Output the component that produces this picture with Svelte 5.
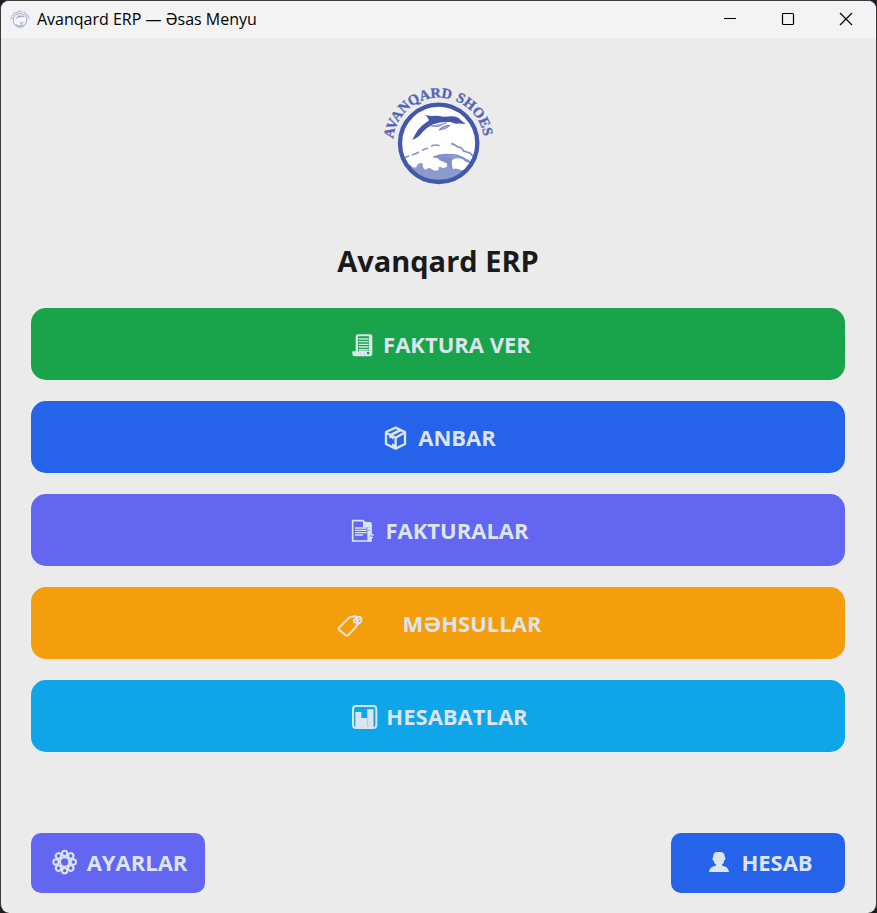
<script>
  const menu = [
    { id: 'invoice', label: 'FAKTURA VER', color: '#19a34a' },
    { id: 'stock', label: 'ANBAR', color: '#2563eb' },
    { id: 'invoices', label: 'FAKTURALAR', color: '#6366f1' },
    { id: 'products', label: 'MƏHSULLAR', color: '#f59e0b', wide: true },
    { id: 'reports', label: 'HESABATLAR', color: '#0ea5e9' },
  ];
</script>

{#snippet logo(id, viewBox)}
  <svg class="logo" {viewBox} role="img" aria-label="Avanqard Shoes">
    <defs>
      <path id="{id}-arc" d="M69 205 A137 137 0 0 1 343 205" />
      <clipPath id="{id}-disc"><circle cx="206" cy="205" r="112" /></clipPath>
    </defs>
    <circle cx="206" cy="205" r="116" fill="#fff" />
    <g clip-path="url(#{id}-disc)">
      <path
        d="M85 268 L122 270 Q128 281 139 276 Q145 261 158 265 Q157 282 168 284 Q177 275 185 283 Q195 291 207 284 Q202 276 211 275 Q222 283 231 274 Q233 262 222 257 Q208 261 204 250 L190 247 Q205 239 231 239 Q252 239 275 247 Q292 252 306 264 Q286 264 277 252 Q259 247 247 254 Q243 268 249 282 Q262 278 272 286 Q286 281 300 285 L330 285 L330 330 L85 330Z"
        fill="#8c9ad0"
      />
      <path d="M190 247 Q211 237 235 239 L258 240 Q279 246 302 262 M243 206 Q254 207 263 216 Q274 215 281 228 L300 234 L310 244" fill="none" stroke="#7f8ec9" stroke-width="5" />
      <path d="M204 248 Q224 240 247 251 Q240 263 247 282 Q236 278 232 264 Q219 263 204 248Z" fill="#7f8ec9" />
      <path d="M103 248 L118 242 M125 240 Q138 237 147 231 M156 226 L174 219 M183 214 Q194 207 209 212" fill="none" stroke="#8795cc" stroke-width="5" />
    </g>
    <path
      d="M165 120 L183 123 Q203 120 219 125 L249 124 Q265 126 271 134 L287 147 Q270 144 258 146 Q249 145 242 141 Q212 139 190 148 Q171 157 158 171 Q146 188 127 195 Q136 177 143 166 Q154 151 176 137 Q177 129 165 120Z"
      fill="#4358aa"
    />
    <path d="M180 152 Q209 158 217 148 L230 143 M207 165 Q217 151 240 151 Q230 162 207 165Z" fill="#a3afd9" stroke="#7182c2" stroke-width="3" />
    <circle cx="206" cy="205" r="116" fill="none" stroke="#4358aa" stroke-width="13" />
    <text class="arc-text" text-anchor="middle">
      <textPath href="#{id}-arc" startOffset="31%">AVANQARD</textPath>
    </text>
    <text class="arc-text" text-anchor="middle">
      <textPath href="#{id}-arc" startOffset="78.500%">SHOES</textPath>
    </text>
  </svg>
{/snippet}

{#snippet icon(id)}
  {#if id === 'invoice'}
    <svg class="icon" viewBox="21 24 96 96" aria-hidden="true">
      <path d="M53 94 V49 Q53 43 60 43 H98 Q103 43 103 49 V103 Q103 109 96 109 H49 Q43 109 43 102 V94Z" fill="currentColor" />
      <path d="M60 49 H93 V93 H84 V96 H94 Q96 104 88 103 L84 95 H60Z" fill="var(--face)" />
      <path d="M62 57 H92 M62 65 H92 M62 73 H92 M62 81 H92 M62 89 H92" stroke="currentColor" stroke-width="4" />
      <path d="M62 94 H84 V103" fill="none" stroke="currentColor" stroke-width="5" />
    </svg>
  {:else if id === 'stock'}
    <svg class="icon" viewBox="126 24 96 96" aria-hidden="true">
      <g fill="none" stroke="currentColor" stroke-width="7" stroke-linejoin="round">
        <path d="M173 44 L201 57 V93 L173 107 L144 93 V57Z" />
        <path d="M144 59 L173 74 L201 58 M173 74 V106" />
        <path d="M158 66 L188 51" stroke-width="8" />
      </g>
      <path d="M154 63 L166 69 V81 L160 75 L154 76Z M162 91 L174 97 V106 L162 100Z" fill="currentColor" />
    </svg>
  {:else if id === 'invoices'}
    <svg class="icon" viewBox="33 24 96 96" aria-hidden="true">
      <path d="M50 44 H80 L88 51 H104 V105 H50Z" fill="none" stroke="currentColor" stroke-width="5" />
      <path d="M81 42 L89 49 H103 L107 57 V64 H81Z" fill="currentColor" />
      <path d="M57 66 H92 M57 73 H102 M57 80 H92 M57 87 H81" stroke="currentColor" stroke-width="4" />
      <path d="M94 64 H107 V107 H94Z" fill="currentColor" />
      <path d="M99 87 H113 M99 94 H111" stroke="currentColor" stroke-width="4" />
      <path d="M91 73 H101 M100 90 H108" stroke="var(--face)" stroke-width="2" />
    </svg>
  {:else if id === 'products'}
    <svg class="icon" viewBox="21 21 96 96" aria-hidden="true">
      <path d="M32 84 L61 55 Q65 50 72 50 L83 49 Q89 54 89 66 Q90 74 85 79 L62 104 Q57 108 52 105 L33 89 Q30 87 32 84Z" fill="none" stroke="currentColor" stroke-width="6" />
      <circle cx="82" cy="62" r="5" fill="none" stroke="currentColor" stroke-width="5" />
      <path d="M81 61 Q84 49 94 51 Q101 52 100 61 Q98 72 83 71" fill="none" stroke="currentColor" stroke-width="6" />
      <path d="M84 61 L95 58" stroke="currentColor" stroke-width="5" />
    </svg>
  {:else if id === 'reports'}
    <svg class="icon" viewBox="33 24 96 96" aria-hidden="true">
      <rect x="48" y="42" width="70" height="66" rx="9" fill="none" stroke="currentColor" stroke-width="6" />
      <path d="M55 60 H73 V78 H90 V52 H110 V106 H55Z" fill="currentColor" />
      <path d="M92 55 V105 M110 54 V105" stroke="var(--face)" stroke-width="1" />
    </svg>
  {:else if id === 'settings'}
    <svg class="icon" viewBox="153 141 96 96" aria-hidden="true">
      <g fill="none" stroke="currentColor" stroke-width="6">
        <circle cx="200" cy="189" r="14" />
        {#each [0, 45, 90, 135, 180, 225, 270, 315] as angle}
          <circle cx="200" cy="163" r="8" transform="rotate({angle} 200 189)" />
        {/each}
      </g>
    </svg>
  {:else}
    <svg class="icon" viewBox="171 141 96 96" aria-hidden="true">
      <path d="M202 171 Q202 159 214 159 H223 Q235 159 236 171 L239 180 L235 184 Q234 193 228 197 V200 Q248 203 249 219 H189 Q190 203 210 200 V197 Q204 193 203 185 L199 181Z" fill="currentColor" />
    </svg>
  {/if}
{/snippet}

<div class="window">
  <header class="titlebar">
    <span class="app-icon">{@render logo('small', '36 32 340 300')}</span>
    <span class="caption">Avanqard ERP — Əsas Menyu</span>
    <button class="control" aria-label="Minimize">
      <svg viewBox="0 0 14 14"><path d="M1 6.500 H13" /></svg>
    </button>
    <button class="control" aria-label="Maximize">
      <svg viewBox="0 0 14 14"><rect x="1.500" y="1.500" width="11" height="11" rx="1" /></svg>
    </button>
    <button class="control" aria-label="Close">
      <svg viewBox="0 0 14 14"><path d="M1 1 L13 13 M13 1 L1 13" /></svg>
    </button>
  </header>

  <main>
    {@render logo('brand', '3 0 405 360')}
    <h1>Avanqard ERP</h1>
    <nav>
      {#each menu as item}
        <button class="tile" class:wide={item.wide} style="--face: {item.color}">
          {@render icon(item.id)}
          <span>{item.label}</span>
        </button>
      {/each}
    </nav>
    <footer>
      <button class="tile small" style="--face: #6366f1">
        {@render icon('settings')}
        <span>AYARLAR</span>
      </button>
      <button class="tile small" style="--face: #2563eb">
        {@render icon('account')}
        <span>HESAB</span>
      </button>
    </footer>
  </main>
</div>

<style>
  :global(body) {
    margin: 0;
    background: #1c1c1e;
  }
  .window {
    box-sizing: border-box;
    min-height: 100vh;
    display: flex;
    flex-direction: column;
    border: 1px solid #3a393b;
    border-bottom: 0;
    border-radius: 9px;
    overflow: hidden;
    background: #ebebeb;
    font-family: 'Segoe UI', 'Open Sans', 'Noto Sans', sans-serif;
  }
  .titlebar {
    box-sizing: border-box;
    display: flex;
    align-items: center;
    height: 37px;
    padding: 0 1px 2px 9px;
    background: #f3f3f3;
  }
  .app-icon {
    display: flex;
    width: 20px;
    margin-right: 7px;
    opacity: 0.6;
  }
  .app-icon .logo {
    width: 20px;
    height: 18px;
  }
  .caption {
    flex: 1;
    font-size: 16px;
    line-height: 24px;
    color: #000;
  }
  .control {
    display: flex;
    align-items: center;
    justify-content: center;
    width: 58px;
    height: 35px;
    padding: 0;
    border: 0;
    background: none;
  }
  .control svg {
    width: 14px;
    height: 14px;
    fill: none;
    stroke: #000;
    stroke-width: 1.2;
  }
  main {
    flex: 1;
    display: flex;
    flex-direction: column;
    align-items: center;
    padding: 37px 31px 20px 30px;
  }
  .logo {
    width: 135px;
    height: 120px;
  }
  .arc-text {
    font-family: 'Liberation Serif', serif;
    font-weight: 700;
    font-size: 43px;
    fill: #5365b2;
    stroke: #5365b2;
    stroke-width: 1;
  }
  h1 {
    margin: 46px 0 27px;
    font-size: 29px;
    line-height: 40px;
    font-weight: 700;
    color: #1a1a1a;
  }
  nav {
    align-self: stretch;
    display: flex;
    flex-direction: column;
    gap: 21px;
  }
  .tile {
    display: flex;
    align-items: center;
    justify-content: center;
    gap: 6px;
    height: 72px;
    padding: 0;
    border: 0;
    border-radius: 15px;
    background: var(--face);
    color: #dce4ee;
    font-family: inherit;
    font-size: 22px;
    line-height: 30px;
    font-weight: 700;
  }
  .wide {
    gap: 36px;
  }
  .small {
    width: 174px;
    height: 60px;
    padding-bottom: 2px;
    border-radius: 10px;
  }
  .icon {
    width: 32px;
    height: 32px;
  }
  footer {
    align-self: stretch;
    display: flex;
    justify-content: space-between;
    margin-top: auto;
    padding-top: 40px;
  }
</style>
